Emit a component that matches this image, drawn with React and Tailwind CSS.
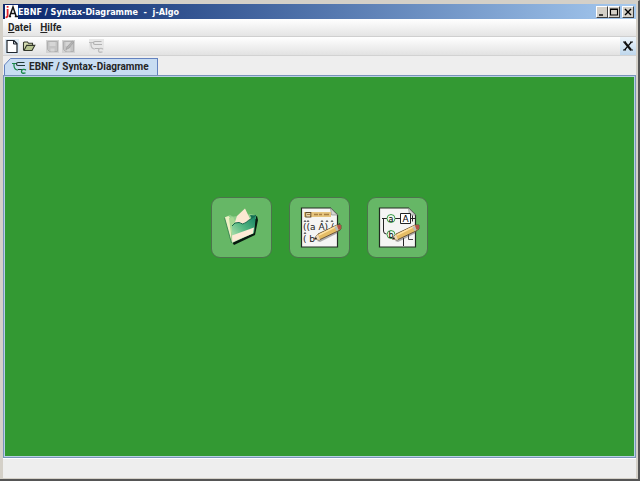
import React from "react";

function Logo() {
  return (
    <svg viewBox="0 0 13 14" className="h-[14px] w-[13px] shrink-0" aria-hidden="true">
      <rect width="13" height="14" fill="#fff" />
      <path d="M2.6 1v1.8M2.6 4v6.5q0 2-2 1.7" fill="none" stroke="#e0222c" strokeWidth="1.8" />
      <path d="M4.6 11.5 8 2l3.2 9.5M5.8 8.4h4.6M3.8 11.5h2.3M9.8 11.5H13" fill="none" stroke="#151515" strokeWidth="1.5" />
    </svg>
  );
}

function NewIcon() {
  return (
    <svg viewBox="0 0 14 15" className="h-[15px] w-[14px]" aria-hidden="true">
      <path d="M2 1.5h7l3 3v9H2z" fill="#fff" stroke="#20262e" strokeWidth="1.2" />
      <path d="M8.5 1.5V5H12z" fill="#b8c0c8" stroke="#20262e" />
    </svg>
  );
}

function OpenIcon() {
  return (
    <svg viewBox="0 0 14 14" className="h-[14px] w-[14px]" aria-hidden="true">
      <path d="M1.5 11V3.6L2.5 3h3l1 1.3h4v2.2" fill="#d9dfb4" stroke="#34382c" strokeWidth="1.1" />
      <path d="M2 11.5 4.6 6.4h8.2L10 11.5z" fill="#b9c591" stroke="#34382c" strokeWidth="1.1" />
    </svg>
  );
}

function SaveIcon({ edit }) {
  return (
    <svg viewBox="0 0 13 13" className="h-[13px] w-[13px]" aria-hidden="true">
      <rect width="13" height="13" fill="#d2d2d2" />
      <path d="M1.5 1.5h10v10h-8l-2-2z" fill="#c4c4c4" stroke="#b0b0b0" />
      <path d="M3.5 2h6v4h-6zM4.5 8.5h4v3h-4z" fill="#d6d6d6" />
      {edit && <path d="m4 9.5 1-2.5 5.500-6 1.300 1L7 8z" fill="#b4b4b4" stroke="#a0a0a0" strokeWidth=".8" />}
    </svg>
  );
}

function SyntaxIcon({ line, accent }) {
  return (
    <svg viewBox="0 0 15 15" className="h-[15px] w-[15px] shrink-0" aria-hidden="true" fill="none" strokeWidth="1.2">
      <path d="M0 3.500h4.500M2 3.500v2.500q.5 4 4 4" stroke={accent} />
      <path d="M12.500 2.500H6q-1.500 0-1.500 1.500T6 5.500h7M6 9.500h5" stroke={line} />
      <path d="M13.500 9.200v1.300M13.500 9.700q-4-1-4 1.700t4 1.500" stroke={accent} strokeWidth="1.3" />
    </svg>
  );
}

function FolderArt() {
  return (
    <svg viewBox="0 0 61 61" className="-m-px h-[61px] w-[61px]" aria-hidden="true">
      <defs>
        <linearGradient id="folderFront" x1="0" y1="1" x2="1" y2="0">
          <stop offset="0" stopColor="#c9ecb8" />
          <stop offset=".5" stopColor="#56b883" />
          <stop offset="1" stopColor="#128062" />
        </linearGradient>
      </defs>
      <path d="m21 45 22-9 1-16 2-1 1 4-3 15-21 10z" fill="#071a0f" />
      <path d="m13.500 20.500 5.500-2.500 3 1.500 6-.500 12-2 5 1.500v3L27 31l-6 5z" fill="#8fce8b" />
      <path d="m13.500 20.500 4-1.500 5 6-2 6v15z" fill="#eef0c4" />
      <path d="m18 21 4-1 3 6-4 4-1 7z" fill="#a5d892" />
      <path d="m39 18 6 .5-4 4z" fill="#157054" />
      <path d="m24 25 2-6 8-7.500 6 12.500-6 6H24z" fill="#fbe8d2" />
      <path d="m21 29 3-3 4-.5q4 3 7 0t5-3.500l5-4-2 18-22 10z" fill="url(#folderFront)" />
      <path d="m21 29 3-3 4-.5q4 3 7 0t5-3.500l5-4" fill="none" stroke="#17694d" />
      <path d="m21 38.500 22-8-1 6-20.500 8.500z" fill="#fdebd6" />
      <path d="m13.500 20.500 7 25.500" fill="none" stroke="#277748" strokeWidth=".8" />
    </svg>
  );
}

function Sheet() {
  return (
    <>
      <path d="M12.500 11h29l7 7v32h-36z" fill="#f5f5f3" stroke="#222c22" strokeWidth="1.2" />
      <path d="m41.500 11 1 7h6z" fill="#d5d5d2" stroke="#8b918b" strokeWidth=".7" />
    </>
  );
}

function Pencil() {
  return (
    <g>
      <path d="m28 44 22-11-1 3-18 9z" fill="#555" opacity=".45" />
      <path d="m25 42 4-5 19-9 4 0v4l-3 2-19 9z" fill="#e5bd65" stroke="#604b32" strokeWidth=".9" />
      <path d="m30 38 18-9" stroke="#ffe1a0" strokeWidth="1.5" />
      <path d="m48 28.500 2-.5 2 .5v3l-2.500 1.500z" fill="#b05048" />
      <path d="m45.500 30 2 4 2-1-2-4z" fill="#b7bec0" />
      <path d="m25 42 4-5 2 6z" fill="#eed9b6" />
      <path d="m25 42 2-2 1 2z" fill="#222" />
    </g>
  );
}

function FormulaArt() {
  return (
    <svg viewBox="0 0 61 61" className="-m-px h-[61px] w-[61px] font-['DejaVu_Sans',sans-serif]" aria-hidden="true">
      <Sheet />
      <path d="M15 15h27v5H15z" fill="#e5c47e" />
      <rect x="16.8" y="15.5" width="5" height="4.5" fill="#fff4d0" stroke="#5e4927" />
      <path d="M18 17.500h3M25 17.500h4m1 0h3m2 0h5" stroke="#a98044" strokeWidth="1.3" />
      <text x="14" y="33" fontSize="9" fill="#171717">((a A) ( (</text>
      <path d="m15 25 1-1.500 1 1.500m1 0 1-1.500 1 1.500m12 0 1-1.500 1 1.500m3 0 1-1.500 1 1.500m3 0 1-1.500 1 1.500M15 37l1-1.500 1 1.500" fill="none" stroke="#222" strokeWidth=".8" />
      <text x="14" y="45" fontSize="9" fill="#171717">( b</text>
      <Pencil />
    </svg>
  );
}

function DiagramArt() {
  return (
    <svg viewBox="0 0 61 61" className="-m-px h-[61px] w-[61px] font-['DejaVu_Sans',sans-serif]" aria-hidden="true">
      <Sheet />
      <path d="M15 21.500h5m8 0h6m10 0h4M16.500 22v12q0 3 3 3M36.500 41v8" fill="none" stroke="#252525" />
      <circle cx="24" cy="21.500" r="4" fill="#eef9ed" stroke="#3d9a4a" />
      <circle cx="24" cy="37.500" r="4" fill="#eef9ed" stroke="#3d9a4a" />
      <path d="M33.500 16.500h10v10h-10z" fill="#fff" stroke="#222" />
      <text x="24" y="24.500" fontSize="8" textAnchor="middle">a</text>
      <text x="24" y="40.500" fontSize="8" textAnchor="middle">b</text>
      <text x="38.500" y="25" fontSize="9" textAnchor="middle">A</text>
      <path d="M46 34.500h-4.500v8H46" fill="none" stroke="#444" />
      <path d="M45.500 18.500v6" fill="none" stroke="#222" />
      <Pencil />
    </svg>
  );
}

function WindowButton({ label, children, className = "" }) {
  return (
    <button aria-label={label} className={`grid h-3 w-3 place-items-center border border-t-white border-l-white border-r-[#404040] border-b-[#404040] bg-[#d4d0c8] ${className}`}>
      <svg viewBox="0 0 10 10" className="h-[10px] w-[10px]" fill="none" stroke="#000" strokeWidth="1.4" aria-hidden="true">{children}</svg>
    </button>
  );
}

function Tile({ label, children }) {
  return (
    <button aria-label={label} className="h-[61px] w-[61px] rounded-[9px] border border-[#4c744c] bg-[#66b766]">
      {children}
    </button>
  );
}

export default function App() {
  return (
    <div className="flex min-h-screen flex-col border-t border-r-2 border-b-2 border-t-[#d4d0c8] border-r-[#555] border-b-[#555] bg-[#d4d0c8] pl-[3px] pr-[2px] pt-[3px] pb-px font-['Roboto',sans-serif] text-[10px] leading-[14px] text-[#252525]">
      <header className="flex h-[15px] items-center bg-linear-to-r from-[#0a246a] to-[#a6caf0] pr-[2px] pl-[2px]">
        <Logo />
        <h1 className="grow whitespace-pre font-['DejaVu_Sans_Condensed','DejaVu_Sans',sans-serif] text-[9px] font-bold text-white">EBNF / Syntax-Diagramme  -  j-Algo</h1>
        <WindowButton label="Minimieren"><path d="M2 8h4" /></WindowButton>
        <WindowButton label="Maximieren"><path d="M1.5 2h7v6h-7zM1.5 2.5h7" strokeWidth="1.1" /></WindowButton>
        <WindowButton label="Schließen" className="ml-[2px]"><path d="m2 2 6 6m0-6L2 8" /></WindowButton>
      </header>

      <nav className="flex h-[18px] items-center gap-[9px] border-b border-[#cfcfcf] bg-linear-to-b from-white to-[#e4e4e4] pl-[5px] font-bold">
        <button><u>D</u>atei</button>
        <button><u>H</u>ilfe</button>
      </nav>

      <div className="flex h-[19px] items-center justify-between border-b border-[#d2d2d2] bg-linear-to-b from-white to-[#e2e2e2] pl-[2px]">
        <div className="flex items-center">
          <button aria-label="Neu" className="bg-[#dce9f3]"><NewIcon /></button>
          <button aria-label="Öffnen" className="ml-[3px]"><OpenIcon /></button>
          <button aria-label="Speichern" disabled className="ml-[10px]"><SaveIcon /></button>
          <button aria-label="Speichern unter" disabled className="ml-[3px]"><SaveIcon edit /></button>
          <button aria-label="Syntax-Diagramm" disabled className="ml-[14px] bg-[#e7e7e7]"><SyntaxIcon line="#b2b2b2" accent="#bcbcbc" /></button>
        </div>
        <button aria-label="Modul schließen" className="grid h-[18px] w-4 place-items-center bg-linear-to-b from-[#eef5fb] to-[#bfd7ec]">
          <svg viewBox="0 0 10 10" className="h-[10px] w-[10px]" fill="none" stroke="#101010" aria-hidden="true">
            <path d="m1.5 1 6.5 8" strokeWidth="2.2" />
            <path d="M8.5 1 1.5 9M0 9h3M7 9h3M7 1h3M0 1h3" strokeWidth="1.2" />
          </svg>
        </button>
      </div>

      <main className="flex grow flex-col bg-[#eee] pt-[2px]">
        <div role="tablist" className="flex h-[17px] pl-px">
          <button role="tab" aria-selected="true" className="flex">
            <svg viewBox="0 0 8 17" className="h-[17px] w-2 shrink-0" aria-hidden="true">
              <path d="M.5 17V7l6-6.5H8V17z" fill="#c8ddf2" />
              <path d="M.5 17V7l6-6.5H8" fill="none" stroke="#6382bf" />
            </svg>
            <span className="flex h-[17px] items-center border-t border-r border-[#6382bf] bg-[#c8ddf2] pr-2 font-bold">
              <SyntaxIcon line="#223a35" accent="#188747" />
              <span className="pl-[2px]">EBNF / Syntax-Diagramme</span>
            </span>
          </button>
        </div>
        <section className="flex grow items-start justify-center gap-[17px] border-2 border-[#b8cfe5] bg-[#339933] pt-30 outline outline-[#7894b8] -outline-offset-1">
          <Tile label="Datei öffnen"><FolderArt /></Tile>
          <Tile label="EBNF bearbeiten"><FormulaArt /></Tile>
          <Tile label="Syntax-Diagramm bearbeiten"><DiagramArt /></Tile>
        </section>
      </main>
      <footer className="h-[20px] border-t border-white bg-[#eee]" />
    </div>
  );
}
